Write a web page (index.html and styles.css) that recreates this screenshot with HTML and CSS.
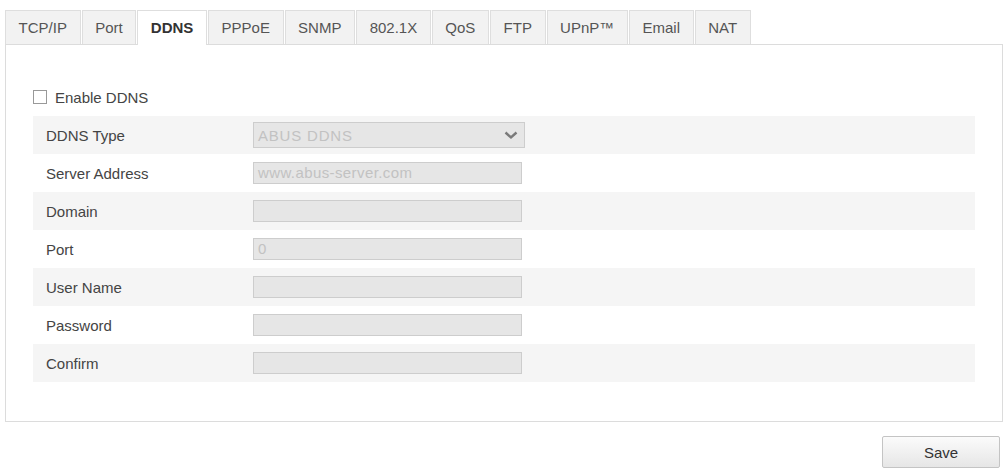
FILE: index.html
```html
<!DOCTYPE html>
<html lang="en">
<head>
    <meta charset="UTF-8">
    <title>DDNS</title>
    <link rel="stylesheet" href="styles.css">
</head>
<body>
    <div class="tabs">
        <div class="tab">TCP/IP</div>
        <div class="tab">Port</div>
        <div class="tab active">DDNS</div>
        <div class="tab">PPPoE</div>
        <div class="tab">SNMP</div>
        <div class="tab">802.1X</div>
        <div class="tab">QoS</div>
        <div class="tab">FTP</div>
        <div class="tab">UPnP™</div>
        <div class="tab">Email</div>
        <div class="tab">NAT</div>
    </div>

    <div class="panel">
        <label class="enable">
            <span class="checkbox"></span>
            Enable DDNS
        </label>

        <div class="rows">
            <div class="row">
                <div class="label">DDNS Type</div>
                <div class="select">
                    <span>ABUS DDNS</span>
                    <svg width="16" height="10" viewBox="0 0 16 10">
                        <polyline points="2.5,2.5 8,7.5 13.5,2.5" fill="none" stroke="#7a7a7a" stroke-width="2.4"/>
                    </svg>
                </div>
            </div>
            <div class="row">
                <div class="label">Server Address</div>
                <div class="input">www.abus-server.com</div>
            </div>
            <div class="row">
                <div class="label">Domain</div>
                <div class="input"></div>
            </div>
            <div class="row">
                <div class="label">Port</div>
                <div class="input">0</div>
            </div>
            <div class="row">
                <div class="label">User Name</div>
                <div class="input"></div>
            </div>
            <div class="row">
                <div class="label">Password</div>
                <div class="input"></div>
            </div>
            <div class="row">
                <div class="label">Confirm</div>
                <div class="input"></div>
            </div>
        </div>
    </div>

    <div class="actions">
        <button class="btn">Save</button>
    </div>
</body>
</html>
```

FILE: styles.css
```css
body {
    margin: 0;
    font-family: "Liberation Sans", Arial, sans-serif;
    font-size: 15px;
    color: #444;
    background: #fff;
}

/* tab strip */
.tabs {
    display: flex;
    margin-top: 10px;
    padding-left: 5px;
}
.tab {
    height: 33px;
    line-height: 33px;
    padding: 0 12.6px;
    margin-right: 1px;
    background: #f2f2f2;
    border: 1px solid #dedede;
    border-bottom: none;
    color: #555;
}
.tab.active {
    background: #fff;
    color: #333;
    font-weight: bold;
    position: relative;
    height: 34px;
    margin-bottom: -1px;
}

/* settings panel */
.panel {
    margin: 0 3px 0 5px;
    border: 1px solid #dcdcdc;
    padding: 42px 27px 39px 27px;
}
.enable {
    display: flex;
    align-items: center;
    height: 20px;
    margin-bottom: 9px;
    color: #444;
}
.checkbox {
    width: 12px;
    height: 12px;
    border: 1px solid #999;
    background: #fff;
    margin-right: 8px;
}

.row {
    display: flex;
    align-items: center;
    height: 38px;
}
.row:nth-child(odd) {
    background: #f5f5f5;
}
.label {
    width: 207px;
    padding-left: 13px;
}
.input {
    width: 263px;
    height: 20px;
    line-height: 20px;
    padding-left: 4px;
    background: #e6e6e6;
    border: 1px solid #cdcdcd;
    color: #c2c2c2;
    font-size: 15px;
    letter-spacing: 0.4px;
}
.select {
    width: 266px;
    height: 24px;
    padding-left: 4px;
    display: flex;
    align-items: center;
    justify-content: space-between;
    background: #e6e6e6;
    border: 1px solid #cdcdcd;
    color: #c2c2c2;
    letter-spacing: 0.8px;
}
.select svg {
    margin-right: 5px;
}

/* buttons */
.actions {
    display: flex;
    justify-content: flex-end;
    padding-right: 6px;
    margin-top: 14px;
}
.btn {
    width: 118px;
    height: 32px;
    font-family: "Liberation Sans", Arial, sans-serif;
    font-size: 15px;
    color: #333;
    background: linear-gradient(#fbfbfb, #e6e6e6);
    border: 1px solid #c4c4c4;
    border-radius: 2px;
    cursor: pointer;
}
```
